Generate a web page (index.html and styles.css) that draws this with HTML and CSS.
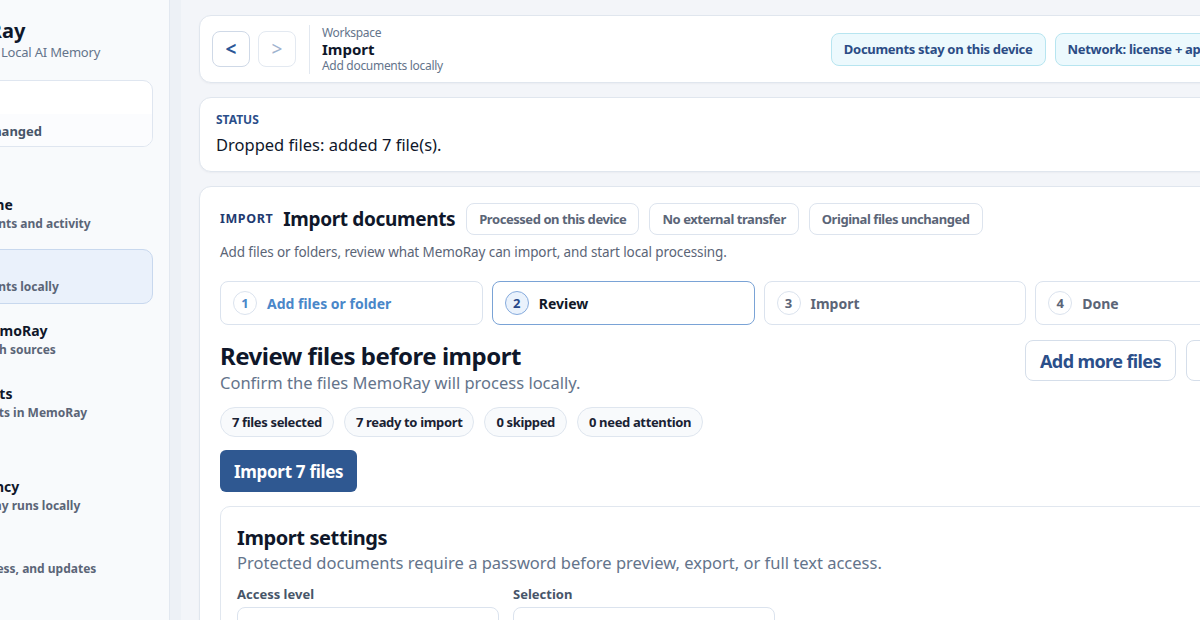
FILE: index.html
```html
<!DOCTYPE html>
<html>
    <head>
        <title>MemoRay - Import</title>
        <link rel="stylesheet" href="styles.css">
    </head>
    <body>
        <div class="app">
            <aside class="sidebar">
                <div class="brand">
                    <div class="brandName">MemoRay</div>
                    <div class="brandSub">Personal Local AI Memory</div>
                </div>

                <div class="trustCard">
                    <div class="trustTop">Privacy</div>
                    <div class="trustBottom">Files unchanged</div>
                </div>

                <nav class="nav">
                    <a class="navItem">
                        <span class="navTitle">Welcome</span>
                        <span class="navSub">Documents and activity</span>
                    </a>
                    <a class="navItem active">
                        <span class="navTitle">Import</span>
                        <span class="navSub">Documents locally</span>
                    </a>
                    <a class="navItem">
                        <span class="navTitle">Ask MemoRay</span>
                        <span class="navSub">Chat with sources</span>
                    </a>
                    <a class="navItem">
                        <span class="navTitle">Contents</span>
                        <span class="navSub">Your texts in MemoRay</span>
                    </a>
                    <a class="navItem navGap">
                        <span class="navTitle">Residency</span>
                        <span class="navSub">MemoRay runs locally</span>
                    </a>
                    <a class="navItem">
                        <span class="navTitle">About</span>
                        <span class="navSub">Key, access, and updates</span>
                    </a>
                </nav>
            </aside>
            <div class="rail"></div>

            <main class="main">
                <div class="card topBar">
                    <button class="navBtn">&lt;</button>
                    <button class="navBtn disabled">&gt;</button>
                    <div class="crumbs">
                        <div class="crumbSmall">Workspace</div>
                        <div class="crumbTitle">Import</div>
                        <div class="crumbSmall">Add documents locally</div>
                    </div>
                    <div class="topBadges">
                        <span class="infoBadge">Documents stay on this device</span>
                        <span class="infoBadge">Network: license + app updates</span>
                    </div>
                </div>

                <div class="card statusCard">
                    <div class="eyebrow">STATUS</div>
                    <div class="statusText">Dropped files: added 7 file(s).</div>
                </div>

                <div class="card importCard">
                    <div class="importHead">
                        <span class="eyebrow dark">IMPORT</span>
                        <h2>Import documents</h2>
                        <span class="chip">Processed on this device</span>
                        <span class="chip">No external transfer</span>
                        <span class="chip">Original files unchanged</span>
                    </div>
                    <p class="lead">Add files or folders, review what MemoRay can import, and start local processing.</p>

                    <div class="steps">
                        <div class="step done"><span class="stepNum">1</span>Add files or folder</div>
                        <div class="step current"><span class="stepNum">2</span>Review</div>
                        <div class="step"><span class="stepNum">3</span>Import</div>
                        <div class="step"><span class="stepNum">4</span>Done</div>
                    </div>

                    <div class="reviewHead">
                        <div>
                            <h3>Review files before import</h3>
                            <div class="reviewSub">Confirm the files MemoRay will process locally.</div>
                        </div>
                        <div class="reviewActions">
                            <button class="ghostBtn">Add more files</button>
                            <button class="ghostBtn">Clear files</button>
                        </div>
                    </div>

                    <div class="counts">
                        <span class="pill">7 files selected</span>
                        <span class="pill">7 ready to import</span>
                        <span class="pill">0 skipped</span>
                        <span class="pill">0 need attention</span>
                    </div>

                    <button class="primaryBtn">Import 7 files</button>

                    <div class="settingsCard">
                        <h4>Import settings</h4>
                        <div class="settingsSub">Protected documents require a password before preview, export, or full text access.</div>
                        <div class="fields">
                            <label class="field">
                                <span>Access level</span>
                                <span class="input"></span>
                            </label>
                            <label class="field">
                                <span>Selection</span>
                                <span class="input"></span>
                            </label>
                        </div>
                    </div>
                </div>
            </main>
        </div>
    </body>
</html>
```

FILE: styles.css
```css
body{
    margin:0;
    overflow:hidden;
    background-color:#f3f5f9;
    color:#0f172a;
    font-family:"Noto Sans", "Open Sans", sans-serif;
}
h2,h3,h4,p{
    margin:0;
}
button{
    font-family:inherit;
    cursor:pointer;
}

/* page is scrolled a bit to the right */
.app{
    display:flex;
    margin-left:-80px;
    height:620px;
}

.sidebar{
    flex:0 0 250px;
    box-sizing:border-box;
    padding:18px 16px;
    background-color:#f8fafc;
    border-right:1px solid #e2e8f0;
}
.rail{
    flex:0 0 11px;
    background-color:#edf1f6;
}
.brandName{
    font-size:20px;
    font-weight:700;
    line-height:24px;
    margin-top:1px;
    margin-left:-10px;
}
.brandSub{
    font-size:13px;
    color:#64748b;
    line-height:18px;
    margin-left:10px;
    letter-spacing:-0.2px;
}
.trustCard{
    margin-top:19px;
    background-color:white;
    border:1px solid #dfe6f0;
    border-radius:10px;
    overflow:hidden;
}
.trustTop{
    height:33px;
    line-height:33px;
    padding-left:12px;
    font-size:12px;
    font-weight:700;
    color:#334155;
}
.trustBottom{
    height:32px;
    line-height:34px;
    background-color:#fbfcfe;
    font-size:13px;
    font-weight:700;
    color:#475569;
}
.nav{
    display:flex;
    flex-direction:column;
    gap:8px;
    margin-top:39px;
}
.navItem{
    display:flex;
    flex-direction:column;
    justify-content:center;
    height:55px;
    box-sizing:border-box;
    padding:0 12px;
    border:1px solid transparent;
    border-radius:10px;
}
.navItem.active{
    background-color:#eaf1fb;
    border-color:#c8d8ee;
}
.navItem.navGap{
    margin-top:30px;
}
.navTitle{
    font-size:14px;
    font-weight:700;
    line-height:20px;
    color:#0f172a;
}
.navSub{
    font-size:12px;
    font-weight:700;
    line-height:18px;
    color:#5b6577;
}

.main{
    flex:0 0 1156px;
    box-sizing:border-box;
    padding:15px 18px;
    display:flex;
    flex-direction:column;
    gap:14px;
}
.card{
    flex-shrink:0;
    background-color:white;
    border:1px solid #e0e6ee;
    border-radius:12px;
    box-shadow:0 1px 2px rgba(15,23,42,0.04);
}

.topBar{
    display:flex;
    align-items:center;
    height:68px;
    box-sizing:border-box;
    padding:0 43px 0 12px;
}
.navBtn{
    width:38px;
    height:36px;
    margin-right:8px;
    background-color:white;
    border:1px solid #cfd9e7;
    border-radius:8px;
    color:#2c5696;
    font-size:19px;
    font-weight:700;
    padding:0;
}
.navBtn.disabled{
    border-color:#e3e9f1;
    color:#9fb3cf;
    font-weight:400;
}
.crumbs{
    margin-left:5px;
    padding-left:12px;
    border-left:1px solid #e2e8f0;
    line-height:16px;
}
.crumbSmall{
    font-size:12px;
    color:#64748b;
    letter-spacing:-0.3px;
}
.crumbTitle{
    font-size:15px;
    font-weight:700;
    line-height:17px;
}
.topBadges{
    margin-left:auto;
    display:flex;
    gap:9px;
}
.infoBadge{
    height:31px;
    line-height:31px;
    padding:0 12px;
    background-color:#ecf9fd;
    border:1px solid #b7e5f0;
    border-radius:8px;
    color:#2b4c85;
    font-size:13px;
    font-weight:700;
    letter-spacing:-0.3px;
}

.statusCard{
    height:75px;
    box-sizing:border-box;
    padding:13px 16px;
}
.eyebrow{
    font-size:12px;
    font-weight:700;
    color:#2b4f8a;
    line-height:18px;
}
.eyebrow.dark{
    color:#1e3a70;
    font-size:12.5px;
    letter-spacing:0.6px;
}
.statusText{
    margin-top:5px;
    font-size:16.5px;
    line-height:22px;
}

.importCard{
    padding:16px 20px;
}
.importHead{
    display:flex;
    align-items:center;
    gap:10px;
}
.importHead h2{
    font-size:19px;
    line-height:28px;
    margin-right:1px;
    letter-spacing:-0.35px;
}
.chip{
    height:32px;
    line-height:30px;
    box-sizing:border-box;
    padding:0 12px;
    border:1px solid #dde4ee;
    border-radius:8px;
    font-size:13px;
    font-weight:700;
    color:#5b6577;
    letter-spacing:-0.45px;
}
.lead{
    margin-top:7px;
    font-size:13.5px;
    line-height:20px;
    color:#5b6577;
    letter-spacing:-0.1px;
}
.steps{
    display:grid;
    grid-template-columns:repeat(4, 1fr);
    gap:9px;
    margin-top:19px;
}
.step{
    display:flex;
    align-items:center;
    gap:10px;
    height:44px;
    box-sizing:border-box;
    padding:0 12px;
    border:1px solid #dbe3ee;
    border-radius:8px;
    font-size:14px;
    font-weight:700;
    color:#5b6577;
}
.stepNum{
    width:24px;
    height:24px;
    box-sizing:border-box;
    border:1px solid #dbe3ee;
    border-radius:50%;
    display:flex;
    align-items:center;
    justify-content:center;
    font-size:13px;
    color:#5b6577;
}
.step.done, .step.done .stepNum{
    color:#4a87c9;
}
.step.current{
    border-color:#7aa3d6;
    color:#111827;
}
.step.current .stepNum{
    background-color:#eaf2fc;
    border-color:#86abdd;
    color:#27488a;
}

.reviewHead{
    display:flex;
    justify-content:space-between;
    align-items:flex-start;
    margin-top:15px;
}
.reviewHead h3{
    font-size:24px;
    line-height:32px;
    letter-spacing:-0.5px;
}
.reviewSub{
    font-size:16.5px;
    line-height:22px;
    color:#64748b;
}
.reviewActions{
    display:flex;
    gap:10px;
}
.ghostBtn{
    height:41px;
    padding:0 14px;
    background-color:white;
    border:1px solid #d5deea;
    border-radius:8px;
    color:#2b4f8a;
    font-size:18px;
    font-weight:700;
    letter-spacing:-0.6px;
}
.counts{
    display:flex;
    gap:10px;
    margin-top:13px;
}
.pill{
    height:30px;
    line-height:28px;
    box-sizing:border-box;
    padding:0 11px;
    background-color:#f8fafc;
    border:1px solid #dfe6ef;
    border-radius:15px;
    font-size:13px;
    font-weight:700;
    color:#1a2233;
    letter-spacing:-0.35px;
}
.primaryBtn{
    display:block;
    margin-top:13px;
    height:42px;
    padding:0 14px;
    background-color:#2f5891;
    border:none;
    border-radius:6px;
    color:white;
    font-size:17px;
    font-weight:700;
    letter-spacing:-0.3px;
}
.settingsCard{
    margin-top:14px;
    padding:18px 16px;
    border:1px solid #e1e7ef;
    border-radius:10px;
}
.settingsCard h4{
    font-size:20px;
    line-height:26px;
    letter-spacing:-0.4px;
}
.settingsSub{
    font-size:16.5px;
    line-height:24px;
    color:#64748b;
}
.fields{
    display:grid;
    grid-template-columns:262px 262px;
    gap:14px;
    margin-top:10px;
}
.field{
    display:flex;
    flex-direction:column;
    gap:4px;
    font-size:13px;
    font-weight:700;
    color:#475569;
}
.input{
    height:40px;
    border:1px solid #dbe3ee;
    border-radius:8px;
}
```
